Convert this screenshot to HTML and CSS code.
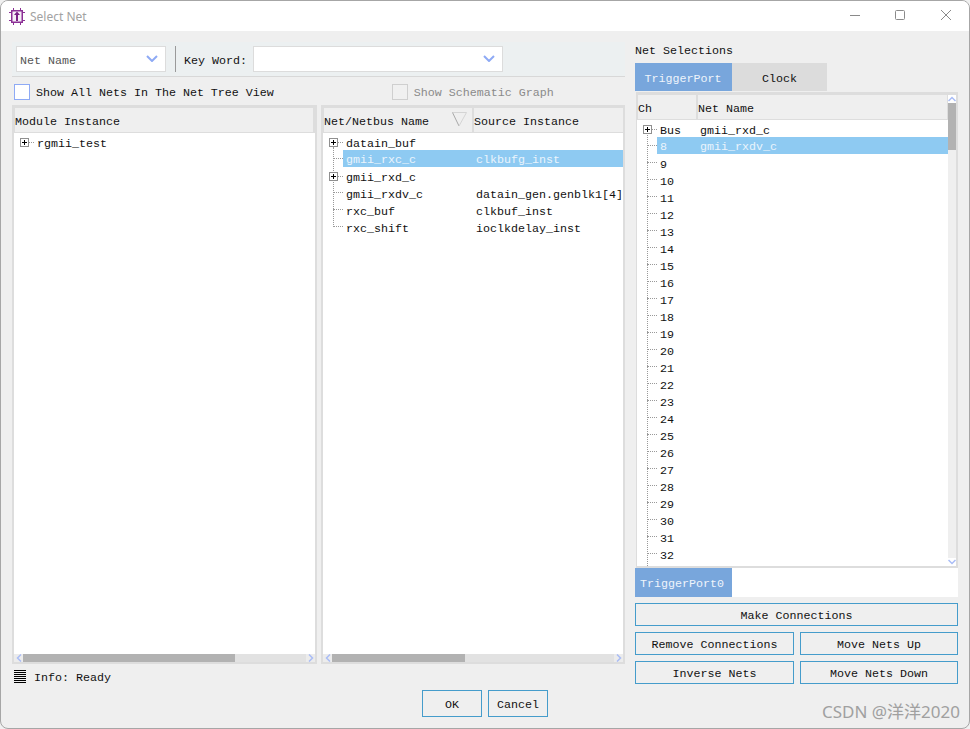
FILE: index.html
```html
<!DOCTYPE html>
<html lang="en">
<head>
<meta charset="utf-8">
<title>Select Net</title>
<link rel="stylesheet" href="styles.css">
</head>
<body>
<div class="window">
  <header class="titlebar">
    <svg class="app-icon" width="16" height="17" viewBox="0 0 16 17"><path d="M4.500 0v3M11.500 0v3M4.500 14v3M11.500 14v3M0 4.500h3M0 12.500h3M13 4.500h3M13 12.500h3" stroke="#8b2f95" fill="none"/><rect x="2.750" y="2.750" width="10.500" height="11.500" fill="#f6eef7" stroke="#8b2f95" stroke-width="1.500"/><path d="M8 3.500l3 3.500H9v6H7V7H5z" fill="#7a1f85"/></svg>
    <span class="title">Select Net</span>
    <div class="winctl">
      <svg width="12" height="12" viewBox="0 0 12 12"><path d="M1 6.500h10" stroke="#8a8a8a"/></svg>
      <svg width="12" height="12" viewBox="0 0 12 12"><rect x="1.500" y="1.500" width="9" height="9" rx="1" fill="none" stroke="#8a8a8a"/></svg>
      <svg class="win-close" width="12" height="12" viewBox="0 0 12 12"><path d="M1 1l10 10M11 1L1 11" stroke="#8a8a8a"/></svg>
    </div>
  </header>
  <main class="content">
    <section class="left">
      <div class="toolbar">
        <div class="combo combo-type"><span class="combo-text">Net Name</span><svg class="chev" width="12" height="7" viewBox="0 0 12 7"><path d="M1 1l5 5 5-5" fill="none" stroke="#8eaaf5" stroke-width="2"/></svg></div>
        <div class="sep"></div>
        <span class="kw">Key Word:</span>
        <div class="combo combo-key"><svg class="chev" width="12" height="7" viewBox="0 0 12 7"><path d="M1 1l5 5 5-5" fill="none" stroke="#8eaaf5" stroke-width="2"/></svg></div>
      </div>
      <div class="checks">
        <label class="check"><span class="box"></span><span class="check-text">Show All Nets In The Net Tree View</span></label>
        <label class="check check-off"><span class="box"></span><span class="check-text">Show Schematic Graph</span></label>
      </div>
      <div class="panels">
        <div class="panel panel-mod">
          <div class="thead"><div class="th th-full">Module Instance</div></div>
          <div class="tbody">
            <div class="row"><span class="plus"></span><span class="c-mod">rgmii_test</span></div>
          </div>
          <div class="hscroll">
            <span class="arr"><svg width="6" height="8" viewBox="0 0 6 8"><path d="M5 0.500L1.500 4 5 7.500" fill="none" stroke="#a9bcf6" stroke-width="1.500"/></svg></span>
            <div class="track"><div class="thumb thumb-a"></div></div>
            <span class="arr"><svg width="6" height="8" viewBox="0 0 6 8"><path d="M1 0.500L4.500 4 1 7.500" fill="none" stroke="#a9bcf6" stroke-width="1.500"/></svg></span>
          </div>
        </div>
        <div class="panel panel-net">
          <div class="thead"><div class="th th-net">Net/Netbus Name<svg class="sort" width="15" height="15" viewBox="0 0 15 15"><path d="M0.500 0.500h14" stroke="#d4d4d4"/><path d="M0.500 0.500L7 14" stroke="#a8a8a8" fill="none"/><path d="M14.500 0.500L7 14" stroke="#d4d4d4" fill="none"/></svg></div><div class="th th-src">Source Instance</div></div>
          <div class="tbody tree">
            <div class="vline vline-net"></div>
            <div class="row"><span class="plus"></span><span class="c-net">datain_buf</span></div>
            <div class="row leaf sel"><span class="c-net">gmii_rxc_c</span><span>clkbufg_inst</span></div>
            <div class="row"><span class="plus"></span><span class="c-net">gmii_rxd_c</span></div>
            <div class="row leaf"><span class="c-net">gmii_rxdv_c</span><span>datain_gen.genblk1[4]</span></div>
            <div class="row leaf"><span class="c-net">rxc_buf</span><span>clkbuf_inst</span></div>
            <div class="row leaf"><span class="c-net">rxc_shift</span><span>ioclkdelay_inst</span></div>
          </div>
          <div class="hscroll">
            <span class="arr"><svg width="6" height="8" viewBox="0 0 6 8"><path d="M5 0.500L1.500 4 5 7.500" fill="none" stroke="#a9bcf6" stroke-width="1.500"/></svg></span>
            <div class="track"><div class="thumb thumb-b"></div></div>
            <span class="arr"><svg width="6" height="8" viewBox="0 0 6 8"><path d="M1 0.500L4.500 4 1 7.500" fill="none" stroke="#a9bcf6" stroke-width="1.500"/></svg></span>
          </div>
        </div>
      </div>
      <div class="info"><span class="lines"></span><span class="info-text">Info: Ready</span></div>
      <div class="actions"><button class="btn btn-act">OK</button><button class="btn btn-act">Cancel</button></div>
    </section>
    <aside class="right">
      <div class="rlabel">Net Selections</div>
      <div class="tabs"><div class="tab tab-on">TriggerPort</div><div class="tab">Clock</div></div>
      <div class="chan">
        <div class="chan-main">
          <div class="thead thead-ch"><div class="th th-ch">Ch</div><div class="th th-name">Net Name</div></div>
          <div class="tbody tree chan-tree">
            <div class="vline vline-ch"></div>
            <div class="row"><span class="plus"></span><span class="c-ch">Bus</span><span>gmii_rxd_c</span></div>
            <div class="row leaf sel"><span class="c-ch">8</span><span>gmii_rxdv_c</span></div>
            <div class="row leaf"><span class="c-ch">9</span></div>
            <div class="row leaf"><span class="c-ch">10</span></div>
            <div class="row leaf"><span class="c-ch">11</span></div>
            <div class="row leaf"><span class="c-ch">12</span></div>
            <div class="row leaf"><span class="c-ch">13</span></div>
            <div class="row leaf"><span class="c-ch">14</span></div>
            <div class="row leaf"><span class="c-ch">15</span></div>
            <div class="row leaf"><span class="c-ch">16</span></div>
            <div class="row leaf"><span class="c-ch">17</span></div>
            <div class="row leaf"><span class="c-ch">18</span></div>
            <div class="row leaf"><span class="c-ch">19</span></div>
            <div class="row leaf"><span class="c-ch">20</span></div>
            <div class="row leaf"><span class="c-ch">21</span></div>
            <div class="row leaf"><span class="c-ch">22</span></div>
            <div class="row leaf"><span class="c-ch">23</span></div>
            <div class="row leaf"><span class="c-ch">24</span></div>
            <div class="row leaf"><span class="c-ch">25</span></div>
            <div class="row leaf"><span class="c-ch">26</span></div>
            <div class="row leaf"><span class="c-ch">27</span></div>
            <div class="row leaf"><span class="c-ch">28</span></div>
            <div class="row leaf"><span class="c-ch">29</span></div>
            <div class="row leaf"><span class="c-ch">30</span></div>
            <div class="row leaf"><span class="c-ch">31</span></div>
            <div class="row leaf"><span class="c-ch">32</span></div>
          </div>
        </div>
        <div class="vscroll">
          <div class="varr"><svg width="8" height="6" viewBox="0 0 8 6"><path d="M0.500 5L4 1.500 7.500 5" fill="none" stroke="#a9bcf6" stroke-width="1.500"/></svg></div>
          <div class="vtrack"><div class="vthumb"></div></div>
          <div class="varr"><svg width="8" height="6" viewBox="0 0 8 6"><path d="M0.500 1L4 4.500 7.500 1" fill="none" stroke="#a9bcf6" stroke-width="1.500"/></svg></div>
        </div>
      </div>
      <div class="ports"><div class="port">TriggerPort0</div></div>
      <div class="rbtns">
        <button class="btn btn-wide">Make Connections</button>
        <button class="btn">Remove Connections</button>
        <button class="btn">Move Nets Up</button>
        <button class="btn">Inverse Nets</button>
        <button class="btn">Move Nets Down</button>
      </div>
    </aside>
  </main>
  <div class="watermark">CSDN @洋洋2020</div>
</div>
</body>
</html>
```
FILE: styles.css
```css
* { box-sizing: border-box; }
html, body { margin: 0; padding: 0; }
body {
  width: 970px; height: 729px; overflow: hidden; background: #f0f0f0;
  font-family: "Liberation Mono", "Courier New", monospace;
  font-size: 11.67px; color: #111;
}
.window {
  position: relative;
  width: 970px; height: 729px;
  border: 1px solid #a6a6a6; border-radius: 8px; overflow: hidden;
  background: #efefef;
  display: flex; flex-direction: column;
}
.window::before {
  content: ""; position: absolute; left: 665px; top: -1px; width: 117px; height: 1px; background: #6f93b8;
}
.window::after {
  content: ""; position: absolute; left: 299px; bottom: -1px; width: 71px; height: 1px; background: #5f82a3;
}
.titlebar {
  height: 30px; background: #fff; flex: none;
  display: flex; align-items: center; padding-left: 8px;
}
.app-icon { flex: none; }
.title { font-family: "Noto Sans", "Liberation Sans", sans-serif; font-size: 12px; color: #a2a2a2; margin-left: 5px; }
.winctl { margin-left: auto; display: flex; gap: 33px; padding: 0 17px 2px 0; }
.win-close { margin-left: 1px; }
.content { flex: 1; display: flex; padding: 11px 11px 0 11px; gap: 10px; min-height: 0; }
.left { width: 613px; flex: none; display: flex; flex-direction: column; }
.toolbar {
  height: 35px; background: #ecf0f1; border-bottom: 1px solid #d8d8d8;
  display: flex; align-items: center; padding: 0 4px 1px 4px; flex: none;
}
.combo {
  height: 26px; background: #fff; border: 1px solid #dcdcdc;
  display: flex; align-items: center; justify-content: space-between; padding: 0 7px 0 3px;
}
.combo-text { padding-top: 5px; }
.combo-type { width: 150px; color: #555; }
.combo-key { width: 250px; justify-content: flex-end; }
.sep { width: 1px; height: 26px; background: #9a9a9a; margin: 0 8px 0 9px; }
.kw { width: 69px; padding-top: 5px; }
.checks { height: 28px; flex: none; display: flex; align-items: center; padding: 1px 0 0 2px; }
.check { display: flex; align-items: center; gap: 6px; }
.check-text { padding-top: 2px; }
.box { width: 16px; height: 16px; background: #fff; border: 1px solid #8eaaf5; display: block; }
.check-off { margin-left: 118px; color: #8a8a8a; }
.check-off .box { background: #f0f0f0; border-color: #cfcfcf; }
.panels { height: 559px; flex: none; display: flex; gap: 4px; }
.panel { border: 2px solid #dddddd; border-top-width: 3px; background: #fff; display: flex; flex-direction: column; }
.panel-mod { width: 305px; }
.panel-net { width: 304px; }
.thead { height: 25px; flex: none; display: flex; gap: 2px; background: #dddddd; padding: 0 0 1px 1px; }
.thead-ch { padding-right: 1px; }
.th { background: #efefef; display: flex; align-items: center; padding-top: 4px; position: relative; }
.th-full { flex: 1; margin-right: 2px; }
.th-net { width: 148px; }
.th-src { flex: 1; }
.sort { position: absolute; left: 128px; top: 4px; }
.tbody { flex: 1; position: relative; min-height: 0; }
.row { height: 17px; display: flex; align-items: center; position: relative; white-space: nowrap; padding-top: 5px; }
.plus {
  position: absolute; left: 6px; top: 5px; width: 9px; height: 9px; border: 1px solid #8f8f8f; background:
    linear-gradient(#000, #000) center / 5px 1px no-repeat,
    linear-gradient(#000, #000) center / 1px 5px no-repeat, #fff;
}
.plus::after { content: ""; position: absolute; left: 8px; top: 3px; width: 5px; border-top: 1px dotted #999; }
.c-mod { margin-left: 23px; }
.c-net { margin-left: 23px; width: 130px; flex: none; }
.row.sel { background: linear-gradient(#8ecaf2, #8ecaf2) 20px 0 / 100% 100% no-repeat; color: #eaf4fc; padding-top: 3px; }
.leaf::before { content: ""; position: absolute; left: 10px; top: 8px; width: 10px; border-top: 1px dotted #999; }
.vline { position: absolute; border-left: 1px dotted #999; }
.vline-net { left: 10px; top: 14px; height: 80px; }
.hscroll { height: 8px; flex: none; display: flex; align-items: stretch; background: #e4e4e4; }
.arr { width: 9px; flex: none; display: flex; align-items: center; justify-content: center; background: #ececec; }
.track { flex: 1; height: 100%; background: #e2e2e2; }
.thumb { height: 100%; background: #b2b2b2; }
.thumb-a { width: 74.900%; }
.thumb-b { width: 47.300%; }
.info { height: 26px; flex: none; display: flex; align-items: center; gap: 8px; padding: 0 0 1px 2px; }
.info-text { padding-top: 2px; }
.lines { width: 12px; height: 13px; background: repeating-linear-gradient(#000 0, #000 1px, #efefef 1px, #efefef 2px); }
.actions { display: flex; gap: 6px; padding-left: 410px; flex: none; }
.btn {
  font: inherit; color: #111; background: #efefef; border: 1px solid #459ccb; padding: 2px 0 0; height: 23px;
}
.btn-act { width: 60px; height: 27px; padding-top: 3px; }
.right { width: 323px; flex: none; display: flex; flex-direction: column; }
.rlabel { height: 21px; flex: none; padding-top: 2px; }
.tabs { height: 28px; display: flex; flex: none; }
.tab { width: 95px; background: #dcdcdc; display: flex; align-items: center; justify-content: center; padding-top: 4px; }
.tab-on { width: 97px; background: #78a6dc; color: #eef4fb; padding-right: 1px; }
.chan { height: 476px; margin-left: 1px; margin-top: 1px; flex: none; border: 2px solid #dddddd; border-top-width: 3px; border-left-width: 1px; background: #fff; display: flex; }
.chan-main { flex: 1; display: flex; flex-direction: column; min-width: 0; }
.th-ch { width: 58px; }
.th-name { flex: 1; }
.chan-tree { overflow: hidden; }
.vscroll { width: 8px; flex: none; background: #efefef; display: flex; flex-direction: column; }
.varr { height: 8px; flex: none; background: #fff; display: flex; align-items: center; justify-content: center; }
.vtrack { flex: 1; }
.vthumb { height: 47px; background: #b2b2b2; }
.c-ch { margin-left: 23px; width: 40px; flex: none; }
.vline-ch { left: 10px; top: 12px; height: 434px; }
.ports { height: 29px; flex: none; background: #fff; }
.port { width: 97px; height: 100%; background: #78a6dc; color: #eef4fb; display: flex; align-items: center; padding: 2px 0 0 5px; }
.rbtns { display: grid; grid-template-columns: 159px 158px; column-gap: 6px; row-gap: 6px; margin-top: 6px; }
.btn-wide { grid-column: 1 / -1; }
.watermark {
  position: absolute; right: 9px; bottom: 5px; color: #a0a0a0; font-size: 17px;
  font-family: "Noto Sans", "Noto Sans CJK SC", sans-serif;
}
```
